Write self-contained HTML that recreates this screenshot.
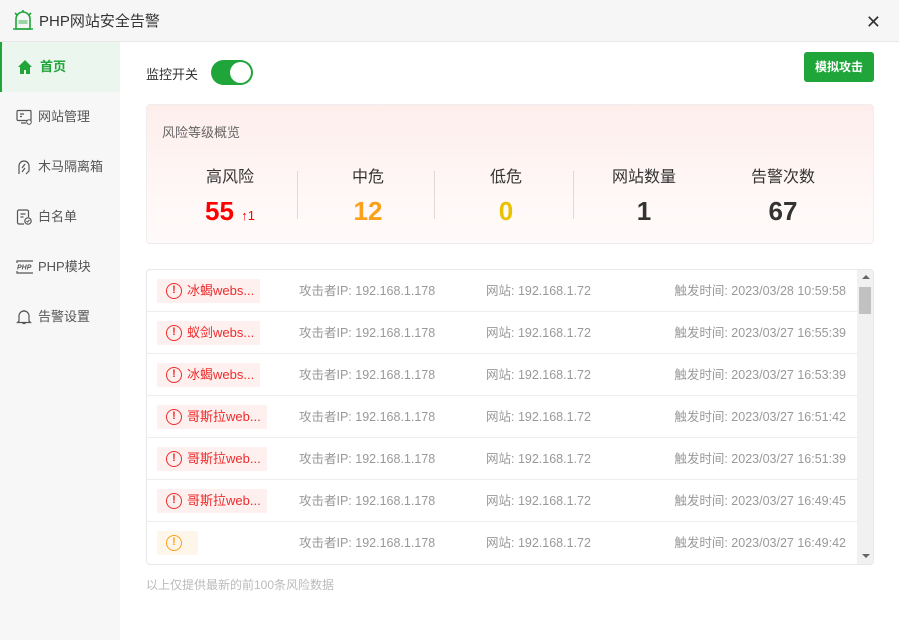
<!DOCTYPE html><html><head><meta charset="utf-8"><style>
*{margin:0;padding:0;box-sizing:border-box}
body{width:899px;height:640px;overflow:hidden;font-family:"Liberation Sans","Noto Sans CJK SC",sans-serif;background:#fff;position:relative;color:#333}
.tb{position:absolute;left:0;top:0;width:899px;height:42px;background:#f6f6f6;border-bottom:1px solid #e8e8e8}
.tb .t{position:absolute;left:39px;top:10px;font-size:15px;color:#333}
.x{position:absolute;right:18px;top:12px;font-size:18px;color:#333}
.sb{position:absolute;left:0;top:42px;width:120px;height:598px;background:#f7f7f7}
.it{position:absolute;left:0;width:120px;height:50px;font-size:13px;color:#555;line-height:50px;padding-left:38px}
.it svg{position:absolute;left:16px;top:17px}
.act{background:#ebf7ee;border-left:2px solid #20a53a;color:#20a53a;font-weight:bold}
.abs{position:absolute}
.card{position:absolute;left:146px;top:104px;width:728px;height:140px;border:1px solid #eee;border-radius:4px;background:linear-gradient(#fdeeec,#fff8f7 70%,#fffafa)}
.col{position:absolute;top:58px;width:138px;text-align:center}
.col .l{font-size:16px;color:#333}
.col .v{font-size:26px;font-weight:bold;margin-top:9px}
.dv{position:absolute;top:66px;width:1px;height:48px;background:#e2d8d8}
.list{position:absolute;left:146px;top:269px;width:728px;height:296px;border:1px solid #e8e8e8;border-radius:4px;overflow:hidden}
.row{position:absolute;left:0;width:710px;height:42px;border-bottom:1px solid #eee;font-size:12.5px;color:#999;line-height:16px}
.tag{position:absolute;left:10px;top:9px;height:24px;background:#fdf0ef;border-radius:2px;color:#ef2b2b;font-size:13px;line-height:24px;padding-left:30px;padding-right:6px}
.tag i{position:absolute;left:9px;top:4px;width:16px;height:16px;border:1.5px solid #ef2b2b;border-radius:50%;font-style:normal;font-size:11px;line-height:13px;text-align:center;font-weight:bold}
.ip{position:absolute;left:152px;top:13px}
.st{position:absolute;left:339px;top:13px}
.tm{position:absolute;right:11px;top:13px}
</style></head><body>
<div class="tb">
<svg class="abs" style="left:12px;top:9px" width="22" height="22" viewBox="0 0 22 22"><path d="M4 20V10a7 7 0 0 1 14 0v10z" fill="none" stroke="#20a53a" stroke-width="1.6"/><path d="M11 1v2M3 4l2 2M19 4l-2 2M1 20h20" stroke="#20a53a" stroke-width="1.6"/><rect x="6.5" y="11" width="9" height="4" fill="#9bd5a6"/></svg>
<div class="t">PHP网站安全告警</div><div class="x">✕</div></div>
<div class="sb">
<div class="it act" style="top:0"><svg width="16" height="16" viewBox="0 0 16 16" style="left:15px"><path d="M1 8L8 1l7 7h-2v7H9v-4H7v4H3V8z" fill="#20a53a"/></svg>首页</div>
<div class="it" style="top:50px"><svg width="16" height="16" viewBox="0 0 16 16"><rect x="1" y="1.5" width="14" height="10" rx="1" fill="none" stroke="#555" stroke-width="1.2"/><path d="M4 5h4M4 7.5h2M5 14h5" stroke="#555" stroke-width="1.2"/><circle cx="13" cy="13" r="2.3" fill="#fff" stroke="#555"/></svg>网站管理</div>
<div class="it" style="top:100px"><svg width="16" height="16" viewBox="0 0 16 16"><path d="M3 15V7a5 5 0 0 1 10 0v5l-3 3M6 9l3-4M9 9l-3 4" fill="none" stroke="#555" stroke-width="1.2"/></svg>木马隔离箱</div>
<div class="it" style="top:150px"><svg width="16" height="16" viewBox="0 0 16 16"><path d="M8 15H3a1.5 1.5 0 0 1-1.5-1.5v-11A1.5 1.5 0 0 1 3 1h8a1.5 1.5 0 0 1 1.5 1.5V8M4.5 5h5M4.5 8h3" fill="none" stroke="#555" stroke-width="1.2"/><circle cx="12" cy="12" r="3.2" fill="none" stroke="#555" stroke-width="1.2"/><path d="M10.5 12l1 1 2-2" fill="none" stroke="#555"/></svg>白名单</div>
<div class="it" style="top:200px"><svg width="18" height="16" viewBox="0 0 18 16"><path d="M1 4V2h16M1 12v2h16" fill="none" stroke="#555" stroke-width="1.2"/><text x="1" y="10.5" font-size="7" font-weight="bold" font-style="italic" fill="#555" font-family="Liberation Sans">PHP</text></svg>PHP模块</div>
<div class="it" style="top:250px"><svg width="16" height="16" viewBox="0 0 16 16"><path d="M3 12V7a5 5 0 0 1 10 0v5l1.5 1.5h-13zM6.5 14.5h3M8 1v1" fill="none" stroke="#555" stroke-width="1.2"/></svg>告警设置</div>
</div>
<div class="abs" style="left:146px;top:64px;font-size:13px;color:#333">监控开关</div>
<div class="abs" style="left:211px;top:60px;width:42px;height:25px;border-radius:13px;background:#20a53a"><div style="position:absolute;right:2px;top:2px;width:21px;height:21px;border-radius:50%;background:#fff"></div></div>
<div class="abs" style="left:804px;top:52px;width:70px;height:30px;background:#20a53a;border-radius:3px;color:#fff;font-size:12px;font-weight:bold;text-align:center;line-height:30px">模拟攻击</div>
<div class="card">
<div class="abs" style="left:15px;top:17px;font-size:13px;color:#666">风险等级概览</div>
<div class="col" style="left:14px"><div class="l">高风险</div><div class="v" style="color:#f00">55 <span style="font-size:13px;font-weight:normal">↑1</span></div></div>
<div class="dv" style="left:150px"></div>
<div class="col" style="left:152px"><div class="l">中危</div><div class="v" style="color:#f9a11b">12</div></div>
<div class="dv" style="left:287px"></div>
<div class="col" style="left:290px"><div class="l">低危</div><div class="v" style="color:#e6c200">0</div></div>
<div class="dv" style="left:426px"></div>
<div class="col" style="left:428px"><div class="l">网站数量</div><div class="v">1</div></div>
<div class="col" style="left:567px"><div class="l">告警次数</div><div class="v">67</div></div>
</div>
<div class="list">
<div class="row" style="top:0"><div class="tag"><i>!</i>冰蝎webs...</div><div class="ip">攻击者IP: 192.168.1.178</div><div class="st">网站: 192.168.1.72</div><div class="tm">触发时间: 2023/03/28 10:59:58</div></div>
<div class="row" style="top:42px"><div class="tag"><i>!</i>蚁剑webs...</div><div class="ip">攻击者IP: 192.168.1.178</div><div class="st">网站: 192.168.1.72</div><div class="tm">触发时间: 2023/03/27 16:55:39</div></div>
<div class="row" style="top:84px"><div class="tag"><i>!</i>冰蝎webs...</div><div class="ip">攻击者IP: 192.168.1.178</div><div class="st">网站: 192.168.1.72</div><div class="tm">触发时间: 2023/03/27 16:53:39</div></div>
<div class="row" style="top:126px"><div class="tag"><i>!</i>哥斯拉web...</div><div class="ip">攻击者IP: 192.168.1.178</div><div class="st">网站: 192.168.1.72</div><div class="tm">触发时间: 2023/03/27 16:51:42</div></div>
<div class="row" style="top:168px"><div class="tag"><i>!</i>哥斯拉web...</div><div class="ip">攻击者IP: 192.168.1.178</div><div class="st">网站: 192.168.1.72</div><div class="tm">触发时间: 2023/03/27 16:51:39</div></div>
<div class="row" style="top:210px"><div class="tag"><i>!</i>哥斯拉web...</div><div class="ip">攻击者IP: 192.168.1.178</div><div class="st">网站: 192.168.1.72</div><div class="tm">触发时间: 2023/03/27 16:49:45</div></div>
<div class="row" style="top:252px;border-bottom:none"><div class="tag" style="background:#fff6ea;width:41px;padding:0"><i style="border-color:#f9a11b;color:#f9a11b">!</i></div><div class="ip">攻击者IP: 192.168.1.178</div><div class="st">网站: 192.168.1.72</div><div class="tm">触发时间: 2023/03/27 16:49:42</div></div>
<div class="abs" style="left:710px;top:0;width:17px;height:296px;background:#f1f1f1">
<div class="abs" style="left:5px;top:5px;width:0;height:0;border-left:4px solid transparent;border-right:4px solid transparent;border-bottom:4px solid #666"></div>
<div class="abs" style="left:2px;top:17px;width:12px;height:27px;background:#c1c1c1"></div>
<div class="abs" style="left:5px;top:284px;width:0;height:0;border-left:4px solid transparent;border-right:4px solid transparent;border-top:4px solid #666"></div>
</div>
</div>
<div class="abs" style="left:146px;top:576px;font-size:12px;color:#bbb">以上仅提供最新的前100条风险数据</div>
</body></html>
